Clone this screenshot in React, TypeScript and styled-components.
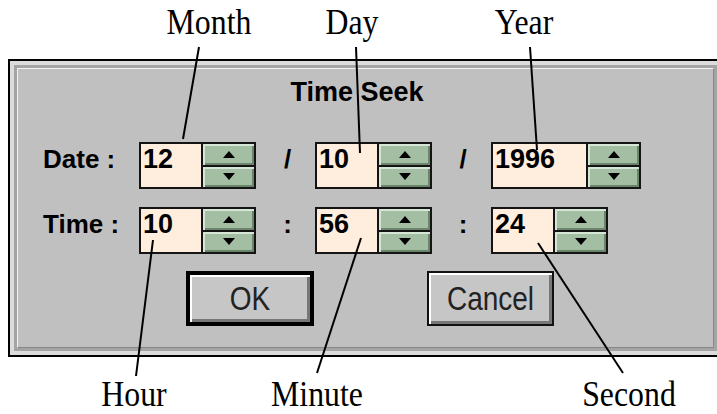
import React from 'react';
import styled, { createGlobalStyle } from 'styled-components';

const GlobalStyle = createGlobalStyle`
  html, body {
    margin: 0;
    padding: 0;
    background: #fff;
    overflow: hidden;
  }
`;

const Figure = styled.div`
  position: relative;
  width: 717px;
  height: 414px;
  overflow: hidden;
  background: #fff;
`;

const NoteRow = styled.div<{ $h: number }>`
  position: relative;
  height: ${(p) => p.$h}px;
`;

// callout labels sit at the spot their leader line points from
const Note = styled.span<{ $x: number; $top: number }>`
  position: absolute;
  left: ${(p) => p.$x}px;
  top: ${(p) => p.$top}px;
  transform: translateX(-50%) scale(1.06, 1.17);
  transform-origin: 50% 86%;
  font-family: 'Liberation Serif', 'Times New Roman', serif;
  font-size: 30px;
  line-height: 28px;
  color: #000;
  white-space: nowrap;
`;

const Leaders = styled.svg`
  position: absolute;
  left: 0;
  top: 0;
  pointer-events: none;
`;

const Dialog = styled.div`
  margin-left: 8px;
  width: 715px;
  height: 298px;
  box-sizing: border-box;
  border: 2px solid #000;
  background: #dcdcdc;
  padding: 4px;
`;

const Frame = styled.div`
  height: 100%;
  box-sizing: border-box;
  border: 3px solid #a4a4a4;
`;

const Panel = styled.div`
  height: 100%;
  box-sizing: border-box;
  background: #c0c0c0;
  border-top: 1px solid #f2f2f2;
  border-left: 1px solid #f2f2f2;
  border-right: 1px solid #888;
  border-bottom: 1px solid #888;
  padding: 10px 0 0 25px;
  display: flex;
  flex-direction: column;
  font-family: 'Liberation Sans', Arial, sans-serif;
  color: #000;
`;

const Title = styled.div`
  font-weight: bold;
  font-size: 27px;
  line-height: 27px;
  text-align: center;
  padding-right: 42px;
`;

const Row = styled.div<{ $gap: number }>`
  display: grid;
  grid-template-columns: 96px 115px 61px 114px 62px auto;
  height: 47px;
  margin-top: ${(p) => p.$gap}px;
`;

const Label = styled.div`
  font-weight: bold;
  font-size: 26px;
  line-height: 26px;
  margin-top: 4px;
  white-space: pre;
`;

const Sep = styled.div`
  justify-self: center;
  padding-left: 6px;
  font-weight: bold;
  font-size: 26px;
  line-height: 26px;
  margin-top: 4px;
`;

const Field = styled.div`
  display: flex;
  align-self: start;
  height: 47px;
  box-sizing: border-box;
  border: 2px solid #141414;
  justify-self: start;
`;

const Value = styled.div<{ $w: number }>`
  width: ${(p) => p.$w}px;
  background: #ffeede;
  border-right: 2px solid #141414;
  padding: 2px 0 0 2px;
  box-sizing: content-box;
  font-weight: bold;
  font-size: 27px;
  line-height: 27px;
`;

const Spinner = styled.div`
  width: 51px;
  display: flex;
  flex-direction: column;
  background: #141414;
  gap: 2px;
`;

const SpinBtn = styled.div`
  flex: 1;
  display: flex;
  align-items: center;
  justify-content: center;
  background: #a4bea4;
  box-shadow: inset 2px 2px 0 #d6e6d6, inset -2px -2px 0 #6a856a;
`;

const Buttons = styled.div`
  display: flex;
  gap: 113px;
  margin-top: 17px;
  padding-left: 143px;
`;

const Button = styled.div<{ $default?: boolean; $w: number }>`
  width: ${(p) => p.$w}px;
  height: 55px;
  box-sizing: border-box;
  border: ${(p) => (p.$default ? '4px solid #000' : '2px solid #111')};
  background: #c6c6c6;
  box-shadow: inset 2px 2px 0 #fff, inset -3px -3px 0 #777;
  display: flex;
  align-items: center;
  justify-content: center;
  font-size: 28px;
  color: #222;
  span {
    display: inline-block;
    transform: scaleY(1.2);
  }
`;

const Arrow = ({ up }: { up?: boolean }) => (
  <svg width="12" height="7" viewBox="0 0 12 7">
    <polygon points={up ? '6,0 12,7 0,7' : '0,0 12,0 6,7'} fill="#000" />
  </svg>
);

const NumField = ({ value, w = 58 }: { value: string; w?: number }) => (
  <Field>
    <Value $w={w}>{value}</Value>
    <Spinner>
      <SpinBtn>
        <Arrow up />
      </SpinBtn>
      <SpinBtn>
        <Arrow />
      </SpinBtn>
    </Spinner>
  </Field>
);

const leaders = [
  [199, 47, 183, 139],
  [356, 47, 360, 153],
  [530, 47, 537, 150],
  [153, 240, 136, 376],
  [361, 238, 317, 373],
  [538, 243, 623, 373],
];

export default function App() {
  return (
    <Figure>
      <GlobalStyle />
      <NoteRow $h={59}>
        <Note $x={209} $top={10}>Month</Note>
        <Note $x={352} $top={10}>Day</Note>
        <Note $x={524} $top={10}>Year</Note>
      </NoteRow>
      <Dialog>
        <Frame>
          <Panel>
            <Title>Time Seek</Title>
            <Row $gap={36}>
              <Label>Date :</Label>
              <NumField value="12" />
              <Sep>/</Sep>
              <NumField value="10" />
              <Sep>/</Sep>
              <NumField value="1996" w={91} />
            </Row>
            <Row $gap={18}>
              <Label>Time :</Label>
              <NumField value="10" />
              <Sep>:</Sep>
              <NumField value="56" />
              <Sep>:</Sep>
              <NumField value="24" />
            </Row>
            <Buttons>
              <Button $default $w={128}>
                <span>OK</span>
              </Button>
              <Button $w={127}>
                <span>Cancel</span>
              </Button>
            </Buttons>
          </Panel>
        </Frame>
      </Dialog>
      <NoteRow $h={57}>
        <Note $x={134} $top={25}>Hour</Note>
        <Note $x={317} $top={25}>Minute</Note>
        <Note $x={629} $top={25}>Second</Note>
      </NoteRow>
      <Leaders width="717" height="414" viewBox="0 0 717 414">
        {leaders.map(([x1, y1, x2, y2], i) => (
          <line key={i} x1={x1} y1={y1} x2={x2} y2={y2} stroke="#000" strokeWidth="2" />
        ))}
      </Leaders>
    </Figure>
  );
}
